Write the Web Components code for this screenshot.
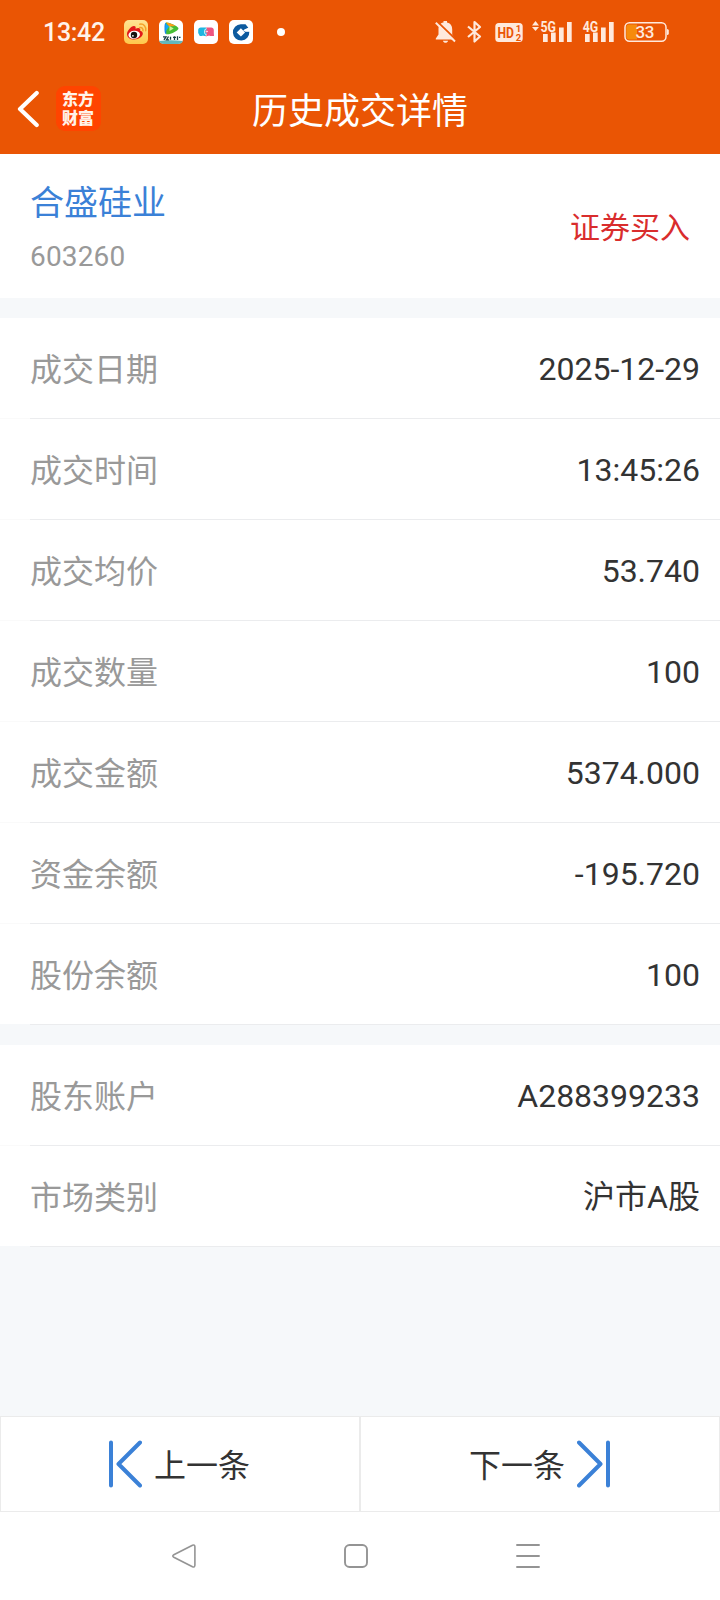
<!DOCTYPE html>
<html lang="zh-CN">
<head>
<meta charset="utf-8">
<title>历史成交详情</title>
<style>
    body {
        margin: 0;
        background: #f6f8fa;
        color: #333;
        font-family: Roboto, "Noto Sans CJK SC", sans-serif;
    }
</style>
</head>
<body>
<trade-page>
    <status-bar slot="top" time="13:42" battery="33"></status-bar>
    <title-bar slot="top">历史成交详情</title-bar>
    <stock-summary code="603260" action="证券买入">合盛硅业</stock-summary>
    <detail-group>
        <detail-row label="成交日期">2025-12-29</detail-row>
        <detail-row label="成交时间">13:45:26</detail-row>
        <detail-row label="成交均价">53.740</detail-row>
        <detail-row label="成交数量">100</detail-row>
        <detail-row label="成交金额">5374.000</detail-row>
        <detail-row label="资金余额">-195.720</detail-row>
        <detail-row label="股份余额" last>100</detail-row>
    </detail-group>
    <detail-group>
        <detail-row label="股东账户">A288399233</detail-row>
        <detail-row label="市场类别" last>沪市A股</detail-row>
    </detail-group>
    <pager-button slot="bottom" direction="prev">上一条</pager-button>
    <pager-button slot="bottom" direction="next">下一条</pager-button>
</trade-page>

<script>
class TradePage extends HTMLElement {
    constructor() {
        super();
        this.attachShadow({ mode: 'open' });
        this.shadowRoot.innerHTML = `
            <style>
                :host {
                    display: flex;
                    flex-direction: column;
                    height: 1600px;
                }
                header { background: #ea5504; height: 154px; }
                main {
                    flex: 1;
                    display: flex;
                    flex-direction: column;
                    gap: 20px;
                }
                .pager { display: flex; }
            </style>
            <header><slot name="top"></slot></header>
            <main><slot></slot></main>
            <div class="pager"><slot name="bottom"></slot></div>
            <system-nav></system-nav>
        `;
    }
}

class StatusBar extends HTMLElement {
    connectedCallback() {
        this.attachShadow({ mode: 'open' });
        this.shadowRoot.innerHTML = `
            <style>
                :host {
                    display: flex;
                    align-items: center;
                    height: 64px;
                    padding: 0 51px 0 43px;
                    color: #ffe9dc;
                }
                .time {
                    font-size: 25px;
                    font-weight: 500;
                    letter-spacing: -.3px;
                    width: 81px;
                    color: #fff3ea;
                    white-space: nowrap;
                }
                .apps { display: flex; gap: 11px; flex: 1; align-items: center; }
                .dot {
                    width: 8px;
                    height: 8px;
                    margin-left: 13px;
                    border-radius: 50%;
                    background: #fff;
                }
                svg { display: block; overflow: visible; }
                .system { display: flex; }
                text { font-family: Roboto, sans-serif; font-weight: 700; }
            </style>
            <span class="time">${this.getAttribute('time')}</span>
            <div class="apps">
                <svg width="24" height="24" viewBox="0 0 24 24">
                    <defs><linearGradient id="gold" x2="0" y2="1"><stop stop-color="#ffe394"/><stop offset="1" stop-color="#ffc84b"/></linearGradient></defs>
                    <rect width="24" height="24" rx="5" fill="url(#gold)"/>
                    <path d="M3 14c0-3 4-8 7-8 1.600 0 2 1 1.500 2.700 3-1.200 5.400-.7 4.700 2 2 .7 2.800 1.700 2.600 3.400-.4 3-4.300 5.400-8.600 5.400S3 17.500 3 14z" fill="#e21919"/>
                    <ellipse cx="10.200" cy="14.800" rx="5.800" ry="4" transform="rotate(-8 10.200 14.800)" fill="#fff"/>
                    <circle cx="10" cy="15" r="3.200" fill="#171313"/>
                    <circle cx="8.900" cy="15.800" r=".9" fill="#fff"/>
                    <path d="M15.800 7.500c2.300-.3 3.500 1.100 3.100 3.300M15.800 4.200c4-.6 6.600 2.400 5.900 6.500" fill="none" stroke="#f5a22a" stroke-width="1.500" stroke-linecap="round"/>
                </svg>
                <svg width="24" height="24" viewBox="0 0 24 24">
                    <rect width="24" height="24" rx="5" fill="#fff"/>
                    <path d="M7 2.500C5.500 3 5.500 5 5.500 8.500s.2 5.500 1.800 5.700L10 9z" fill="#1686e8"/>
                    <path d="M7 2.500C10 2.200 18.500 6 19.400 8c.5 1.400-2.500 3.500-4.700 4.500-2.500 1.200-5 2-7.400 1.700z" fill="#44bd35"/>
                    <path d="M7 2.500c2.200-.2 7 2 9.500 3.400l-6.500.6z" fill="#ff9a1b"/>
                    <path d="M6.500 3.500v8l3.700-5z" fill="#13a8f5"/>
                    <path d="M10.500 6v5l4.200-2.500z" fill="#c4f79b"/>
                    <path d="M.2 21q11.800-1.500 23.600 0c-.5 2-2.200 3-4.800 3H5c-2.600 0-4.300-1-4.800-3z" fill="#62b8bc"/>
                    <path d="M4 16.800h3l-2 3M9.500 16.500l-2 3.300h2.500m1.500-3v3M14 17.300h3m-1.500-1v3.700m3-3.700v3.700m1.500-2.700h1.500" fill="none" stroke="#173e46" stroke-width="1.300"/>
                </svg>
                <svg width="24" height="24" viewBox="0 0 24 24">
                    <rect width="24" height="24" rx="5" fill="#fff"/>
                    <path d="M6.800 7.500H12l1 2-1.800 2 1.800 2-1.500 2.500H9.500L9 15l-.5 1H5.800L4.200 13v-3C4.200 8.500 5.300 7.500 6.800 7.500z" fill="#1fb6e0"/>
                    <path d="M12 7.500h5.200c1.500 0 2.600 1 2.600 2.500v3l.2 3h-4.500l-.5-1-.5 1h-1.700l-1.300 1.200 1.500-3.700-1.800-2 1.800-2z" fill="#ee5580"/>
                    <path d="M12.300 8.500c-2.300 1-2.300 5.500 0 6.500" fill="none" stroke="#fff" stroke-width="1"/>
                    <circle cx="13" cy="11.500" r=".8" fill="#fff"/>
                </svg>
                <svg width="24" height="24" viewBox="0 0 24 24">
                    <rect width="24" height="24" rx="5" fill="#fff"/>
                    <path d="M11.800 4.200h4.700l2.800 3.600-4 1.700 1 2.300h4A8.200 8.200 0 1 1 11.800 4.200z" fill="#0c5a9f"/>
                    <path d="M11.900 8.200l4.200 4.200-4.200 4.200-4.200-4.200z" fill="#fff"/>
                    <path d="M14.200 10.300l5.600-2.300v3.200h-4.700z" fill="#fff"/>
                </svg>
                <span class="dot"></span>
            </div>
            <div class="system">
                <svg width="234" height="24" viewBox="0 0 234 24" fill="currentColor">
                    <!-- muted bell -->
                    <path d="M8.500 2.500V1h3.500v1.500c3.400.6 5.200 3.100 5.200 6.700v5.300l2.800 4v1H.8v-1L3.500 14.500V9.200C3.500 5.600 5 3.100 8.500 2.500z"/>
                    <path d="M8 20.700h5c-.5 2.800-4.500 2.800-5 0z"/>
                    <path d="M2 1.400l19.500 18.800" fill="none" stroke="#ea5504" stroke-width="2"/>
                    <path d="M.8 2.700l19.200 18.800" fill="none" stroke="currentColor" stroke-width="1.900"/>
                    <!-- bluetooth -->
                    <path d="M33 6.500l12 10-5.500 5V2l5.500 5-12 10" fill="none" stroke="currentColor" stroke-width="2.200" stroke-linejoin="round"/>
                    <!-- HD voice -->
                    <rect x="60.300" y="3" width="27.400" height="19" rx="3.500"/>
                    <g fill="#ea5504">
                        <text x="62.500" y="18" font-size="14.500" textLength="16.500" lengthAdjust="spacingAndGlyphs">HD</text>
                        <text x="80.700" y="12" font-size="9.500">1</text>
                        <text x="80.700" y="20.500" font-size="9.500">2</text>
                    </g>
                    <!-- 5G -->
                    <path d="M97 5.500l3.500-4.500 3.500 4.500zM97 7l3.500 4L104 7z"/>
                    <text x="105.500" y="11.500" font-size="15" textLength="15.500" lengthAdjust="spacingAndGlyphs">5G</text>
                    <path d="M108 14h4.700v8H108zM116 12.500h4.700V22H116zM124 7.500h4.700V22H124zM132 2h4.700v20H132z"/>
                    <!-- 4G -->
                    <text x="147.700" y="11.500" font-size="15" textLength="15.500" lengthAdjust="spacingAndGlyphs">4G</text>
                    <path d="M150 14h4.700v8H150zM158 12.500h4.700V22H158zM166 7.500h4.700V22H166zM174 2h4.700v20H174z"/>
                    <!-- battery -->
                    <path d="M194 4.500h8v15h-8c-1.700 0-2.700-1-2.700-2.700V7.200c0-1.700 1-2.700 2.700-2.700z" fill="#f68b0c"/>
                    <rect x="190" y="2.700" width="41" height="18.600" rx="4.500" fill="none" stroke="currentColor" stroke-width="1.500"/>
                    <path d="M232 9q1.800 0 1.800 1.500v3Q233.800 15 232 15z"/>
                    <text x="200.500" y="18.300" font-size="17" style="font-weight:500" textLength="19" lengthAdjust="spacing">${this.getAttribute('battery')}</text>
                </svg>
            </div>
        `;
    }
}

class TitleBar extends HTMLElement {
    constructor() {
        super();
        this.attachShadow({ mode: 'open' });
        this.shadowRoot.innerHTML = `
            <style>
                :host {
                    display: grid;
                    grid-template-columns: 1fr auto 1fr;
                    align-items: center;
                    height: 90px;
                    color: #fff;
                }
                .left { display: flex; align-items: center; padding: 0 0 1px 17px; }
                svg { display: block; }
                .logo {
                    width: 45px;
                    height: 45px;
                    box-sizing: border-box;
                    padding: 4px 1px 0 0;
                    margin-left: 17px;
                    border-radius: 9px;
                    background: #ff4400;
                    font: 900 16px/19px "Liberation Sans", "Noto Sans CJK SC", sans-serif;
                    text-align: center;
                    color: #fff3e9;
                }
                .title { font-size: 36px; line-height: 54px; padding-top: 6px; }
            </style>
            <div class="left">
                <svg width="22" height="38" viewBox="0 0 22 38" fill="none" stroke="#fff" stroke-width="4.200" stroke-linecap="round" stroke-linejoin="round">
                    <path d="M19.700 3L3 19l16.700 16"/>
                </svg>
                <div class="logo">东方<br>财富</div>
            </div>
            <div class="title"><slot></slot></div>
        `;
    }
}

class StockSummary extends HTMLElement {
    connectedCallback() {
        this.attachShadow({ mode: 'open' });
        this.shadowRoot.innerHTML = `
            <style>
                :host {
                    display: flex;
                    align-items: center;
                    justify-content: space-between;
                    height: 144px;
                    padding: 0 30px;
                    background: #fff;
                }
                .name { font-size: 34px; line-height: 50px; color: #3b81d7; }
                .code { font-size: 28px; line-height: 34px; margin-top: 12px; letter-spacing: .15px; color: #999; }
                .action { font-size: 30px; line-height: 44px; padding-top: 3px; color: #d92d2d; }
            </style>
            <div>
                <div class="name"><slot></slot></div>
                <div class="code">${this.getAttribute('code')}</div>
            </div>
            <div class="action">${this.getAttribute('action')}</div>
        `;
    }
}

class DetailGroup extends HTMLElement {
    constructor() {
        super();
        this.attachShadow({ mode: 'open' });
        this.shadowRoot.innerHTML = `
            <style>
                :host { display: block; }
            </style>
            <slot></slot>
        `;
    }
}

class DetailRow extends HTMLElement {
    connectedCallback() {
        this.attachShadow({ mode: 'open' });
        this.shadowRoot.innerHTML = `
            <style>
                :host { display: block; --edge: #fafafa; }
                :host([last]) { --edge: #f6f8fa; }
                .row {
                    display: flex;
                    align-items: center;
                    justify-content: space-between;
                    height: 100px;
                    padding: 0 20px 0 30px;
                    background: #fff;
                    font-size: 32px;
                    line-height: 48px;
                }
                .label { padding-top: 4px; color: #999; }
                .value { padding-top: 2px; }
                .line {
                    height: 1px;
                    background: linear-gradient(90deg, var(--edge) 30px, #ebecee 30px);
                }
            </style>
            <div class="row">
                <span class="label">${this.getAttribute('label')}</span>
                <span class="value"><slot></slot></span>
            </div>
            <div class="line"></div>
        `;
    }
}

class PagerButton extends HTMLElement {
    connectedCallback() {
        const next = this.getAttribute('direction') === 'next';
        this.attachShadow({ mode: 'open' });
        this.shadowRoot.innerHTML = `
            <style>
                :host {
                    flex: 1;
                    display: flex;
                    align-items: center;
                    justify-content: center;
                    flex-direction: ${next ? 'row-reverse' : 'row'};
                    gap: 12px;
                    height: 94px;
                    padding-right: 1px;
                    border: 1px solid #ebebeb;
                    background: #fff;
                    font-size: 32px;
                }
                svg { display: block; margin-bottom: 1px; transform: ${next ? 'scaleX(-1)' : 'none'}; }
                span { padding-bottom: 2px; }
            </style>
            <svg width="33" height="48" viewBox="0 0 33 48" fill="none" stroke="#3b81d7" stroke-width="4" stroke-linecap="round" stroke-linejoin="round">
                <path d="M2 2.500v43M31 2.500L9.500 24 31 45.500"/>
            </svg>
            <span><slot></slot></span>
        `;
    }
}

class SystemNav extends HTMLElement {
    constructor() {
        super();
        this.attachShadow({ mode: 'open' });
        this.shadowRoot.innerHTML = `
            <style>
                :host {
                    display: flex;
                    align-items: center;
                    justify-content: center;
                    gap: 148px;
                    height: 88px;
                    padding-right: 8px;
                    box-sizing: border-box;
                    background: #fff;
                }
                svg { display: block; fill: none; stroke: #949494; stroke-width: 1.900; stroke-linecap: round; stroke-linejoin: round; }
            </style>
            <svg width="24" height="24" viewBox="0 0 24 24"><path d="M1.800 10.800L20.500 1.200Q22.700.4 22.900 2.800V21.200Q22.700 23.600 20.500 22.800L1.800 13.200Q-.2 12 1.800 10.800z" stroke-width="1.600"/></svg>
            <svg width="24" height="24" viewBox="0 0 24 24"><rect x="1" y="1" width="22" height="22" rx="4.500"/></svg>
            <svg width="24" height="24" viewBox="0 0 24 24"><path d="M1 1h22M1 12h22M1 23h22"/></svg>
        `;
    }
}

customElements.define('system-nav', SystemNav);
customElements.define('trade-page', TradePage);
customElements.define('status-bar', StatusBar);
customElements.define('title-bar', TitleBar);
customElements.define('stock-summary', StockSummary);
customElements.define('detail-group', DetailGroup);
customElements.define('detail-row', DetailRow);
customElements.define('pager-button', PagerButton);
</script>
</body>
</html>
